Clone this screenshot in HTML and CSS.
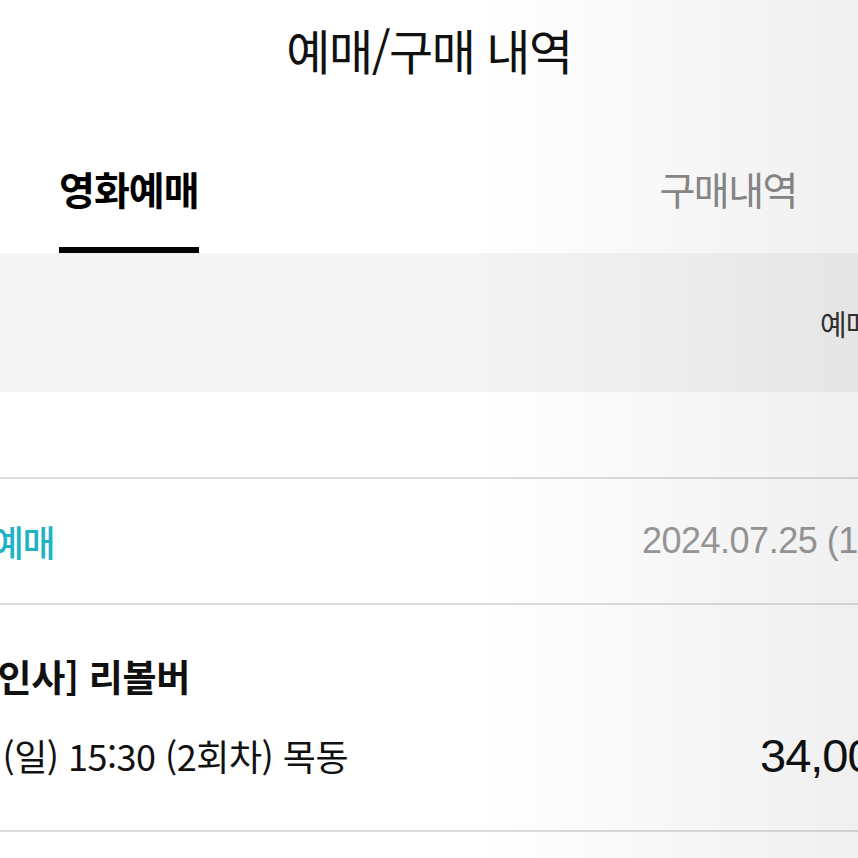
FILE: index.html
```html
<!DOCTYPE html>
<html lang="ko">
<head>
    <meta charset="UTF-8">
    <meta name="viewport" content="width=device-width, initial-scale=1.0">
    <title>예매/구매 내역</title>
    <link rel="stylesheet" href="styles.css">
</head>
<body>
    <header class="page-header">
        <h1>예매/구매 내역</h1>
    </header>

    <nav class="tabs">
        <a class="tab active">영화예매</a>
        <a class="tab">구매내역</a>
    </nav>

    <div class="notice-band">
        <span class="notice-text">예매내역은 최근 1개월까지 조회 가능합니다</span>
    </div>

    <div class="spacer"></div>

    <div class="row status-row">
        <div class="left-cut"><span class="status">영화예매</span></div>
        <span class="date">2024.07.25 (14:02)</span>
    </div>

    <div class="row ticket-row">
        <div class="ticket-info">
            <div class="left-cut movie-title"><span>[무대인사] 리볼버</span></div>
            <div class="left-cut movie-when"><span>2024.08.11 (일) 15:30 (2회차) 목동</span></div>
        </div>
        <span class="price">34,000원</span>
    </div>
</body>
</html>
```

FILE: styles.css
```css
html, body {
    margin: 0;
    padding: 0;
}
body {
    width: 858px;
    height: 858px;
    overflow: hidden;
    background: #fff;
    color: #111;
    font-family: "Noto Sans CJK KR", "Noto Sans", sans-serif;
}
body::after {
    content: "";
    position: fixed;
    inset: 0;
    pointer-events: none;
    background: linear-gradient(to right, rgba(0,0,0,0) 55%, rgba(0,0,0,0.06) 100%);
}
.page-header {
    height: 98px;
    display: flex;
    align-items: center;
    justify-content: center;
}
.page-header h1 {
    margin: 0;
    font-size: 48px;
    font-weight: 400;
    letter-spacing: -1.5px;
    line-height: 1;
}
.tabs {
    height: 155px;
    display: flex;
    justify-content: space-between;
    padding: 0 61px 0 59px;
}
.tab {
    display: flex;
    align-items: center;
    padding-top: 30px;
    box-sizing: border-box;
    font-size: 39px;
    letter-spacing: -1.5px;
    color: #8a8a8a;
    border-bottom: 6px solid transparent;
}
.tab.active {
    color: #000;
    font-weight: 700;
    letter-spacing: -1px;
    border-bottom-color: #000;
}
.notice-band {
    height: 139px;
    background: #f4f4f4;
    display: flex;
    align-items: center;
    padding-left: 820px;
    white-space: nowrap;
}
.notice-text {
    font-size: 29px;
    color: #333;
    letter-spacing: -1px;
}
.spacer {
    height: 85px;
    border-bottom: 2px solid #dedede;
}
.row {
    display: flex;
    align-items: center;
    white-space: nowrap;
    border-bottom: 2px solid #dedede;
}
.left-cut {
    width: 190px;
    display: flex;
    justify-content: flex-end;
}
.status-row {
    height: 124px;
}
.status-row .left-cut {
    width: 54px;
}
.status {
    color: #1fb3c3;
    font-size: 36px;
    font-weight: 500;
    letter-spacing: -1.5px;
}
.date {
    margin-left: 588px;
    font-family: "Liberation Sans", "Noto Sans CJK KR", sans-serif;
    font-size: 36px;
    color: #9a9a9a;
    letter-spacing: -0.5px;
}
.ticket-row {
    height: 225px;
    align-items: flex-start;
}
.ticket-info {
    padding-top: 44px;
    display: flex;
    flex-direction: column;
    gap: 26px;
}
.movie-title span {
    font-size: 37px;
    font-weight: 700;
    letter-spacing: -0.3px;
}
.movie-when {
    width: 348px;
}
.movie-when span {
    font-size: 36px;
    letter-spacing: -0.5px;
}
.price {
    margin-left: 412px;
    margin-top: 127px;
    font-family: "Liberation Sans", "Noto Sans CJK KR", sans-serif;
    font-size: 47px;
    letter-spacing: -1px;
    line-height: 1;
}
```
